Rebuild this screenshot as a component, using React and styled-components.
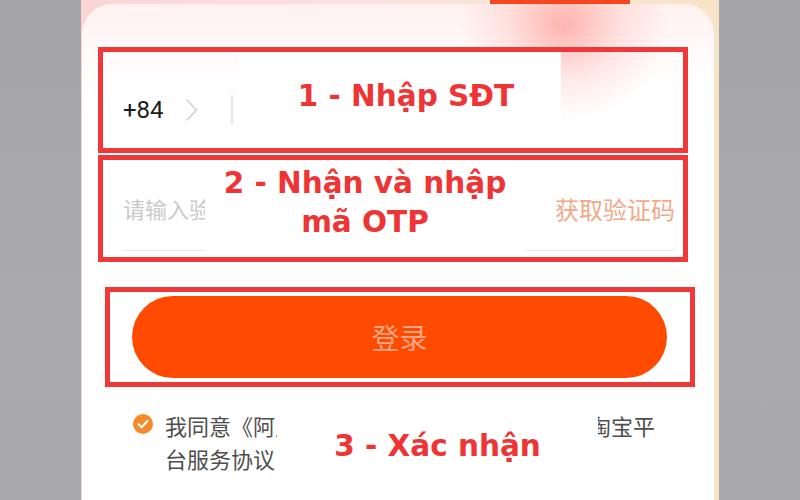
import React from "react";
import styled, { createGlobalStyle } from "styled-components";

const Global = createGlobalStyle`
  html, body { margin: 0; padding: 0; }
  body { width: 800px; height: 500px; overflow: hidden; background: #a7a7ab; }
`;

const Page = styled.div`
  display: flex;
  width: 800px;
  height: 500px;
`;

const Side = styled.div`
  width: ${(p) => p.$w}px;
  flex: none;
  background: linear-gradient(180deg, #a5a5a9 0%, #aaaaae 60%, #a9a9ad 100%);
`;

const Phone = styled.div`
  width: 638px;
  flex: none;
  padding-top: 4px;
  box-sizing: border-box;
  background:
    linear-gradient(#f4461f, #f4461f) 409px 0 / 140px 5px no-repeat,
    linear-gradient(90deg, #fbd5d5 0%, #fbe2df 45%, #f7e4c8 100%);
  overflow: hidden;
`;

const Card = styled.div`
  margin: 0 5px 0 1px;
  height: 496px;
  border-radius: 30px 30px 0 0;
  box-sizing: border-box;
  padding: 43px 0 0 16px;
  background:
    radial-gradient(ellipse 105px 95px at 482px 22px, rgba(255, 90, 80, 0.42), rgba(255, 120, 110, 0.16) 55%, rgba(255, 255, 255, 0) 100%),
    linear-gradient(180deg, #fff1ef 0px, #fff9f9 40px, #ffffff 90px);
`;

const Annot = styled.div`
  box-sizing: border-box;
  width: 590px;
  height: ${(p) => p.$h}px;
  margin-top: ${(p) => p.$mt || 0}px;
  margin-left: ${(p) => p.$ml || 0}px;
  border: 5px solid #f13838;
  display: flex;
  align-items: ${(p) => p.$align || "stretch"};
  padding: ${(p) => p.$pad || "0"};
`;

const Label = styled.div`
  font-family: "DejaVu Sans", "Open Sans", sans-serif;
  font-weight: 700;
  font-size: 29.5px;
  color: #ee3434;
  line-height: ${(p) => p.$lh || 34}px;
  text-align: center;
  white-space: nowrap;
`;

const Patch = styled.div`
  background: #ffffff;
  align-self: stretch;
  display: flex;
  justify-content: center;
  align-items: center;
  width: ${(p) => (p.$w ? p.$w + "px" : "auto")};
  flex: ${(p) => (p.$w ? "none" : "1")};
  margin-left: ${(p) => p.$ml || 0}px;
  padding-bottom: ${(p) => p.$pb || 0}px;
  padding-left: ${(p) => p.$pl || 0}px;
  box-sizing: border-box;
`;

const Prefix = styled.div`
  display: flex;
  align-items: center;
  padding-left: 20px;
  margin-top: 20px;
`;

const Code = styled.span`
  font-family: "Roboto", "Liberation Sans", sans-serif;
  font-size: 24px;
  color: #1c1c1c;
  width: 47px;
`;

const Chevron = styled.svg`
  margin-left: 15px;
  flex: none;
`;

const Divider = styled.div`
  width: 2px;
  height: 30px;
  background: #e8e8e8;
  margin-left: 33px;
`;

const Field = styled.div`
  box-sizing: border-box;
  width: ${(p) => p.$w}px;
  margin-left: ${(p) => p.$ml || 0}px;
  margin-right: ${(p) => p.$mr || 0}px;
  height: 91px;
  padding-top: 6px;
  border-bottom: 1.5px solid #e9e9e9;
  display: flex;
  align-items: center;
  justify-content: ${(p) => (p.$right ? "flex-end" : "flex-start")};
  overflow: hidden;
  white-space: nowrap;
  font-family: "Noto Sans CJK SC", sans-serif;
  font-size: ${(p) => p.$fs || 22}px;
  color: ${(p) => p.$color};
  flex: none;
`;

const LoginButton = styled.button`
  width: 535px;
  height: 82px;
  border: none;
  border-radius: 41px;
  background: #ff4b00;
  color: #f7a788;
  font-family: "Noto Sans CJK SC", sans-serif;
  font-size: 28px;
  padding: 0;
`;

const Agree = styled.div`
  display: flex;
  align-items: flex-start;
  margin-top: 21px;
  padding-left: 35px;
`;

const Check = styled.svg`
  flex: none;
  margin-top: 6px;
  margin-right: 12px;
`;

const AgreeGrid = styled.div`
  width: 490px;
  display: grid;
  grid-template-columns: 112px 1fr 57px;
  grid-template-rows: 33px 33px;
  font-family: "Noto Sans CJK SC", sans-serif;
  font-size: 22px;
  color: #4e4e4e;
`;

const Clip = styled.div`
  overflow: hidden;
  white-space: nowrap;
  display: flex;
  align-items: center;
  justify-content: ${(p) => (p.$right ? "flex-end" : "flex-start")};
  grid-column: ${(p) => p.$col};
  grid-row: ${(p) => p.$row};
`;

const GridLabel = styled.div`
  grid-column: 2;
  grid-row: 1 / span 2;
  display: flex;
  align-items: center;
  justify-content: center;
  padding-top: 10px;
`;

export default function App() {
  return (
    <>
      <Global />
      <Page>
        <Side $w={81} />
        <Phone>
          <Card>
            <Annot $h={106} $align="center">
              <Prefix>
                <Code>+84</Code>
                <Chevron width="13" height="24" viewBox="0 0 13 24">
                  <path d="M1.5 1.5 L11.5 12 L1.5 22.5" fill="none" stroke="#d2d2d2" strokeWidth="1.6" />
                </Chevron>
                <Divider />
              </Prefix>
              <Patch $w={322} $ml={6} $pb={9} $pl={12}>
                <Label>1 - Nhập SĐT</Label>
              </Patch>
            </Annot>
            <Annot $h={107} $mt={2}>
              <Field $w={82} $ml={20} $color="#c9c9c9">请输入验证码</Field>
              <Patch $pb={12}>
                <Label $lh={39}>
                  2 - Nhận và nhập
                  <br />
                  mã OTP
                </Label>
              </Patch>
              <Field $w={150} $mr={8} $right $color="#f2a98a" $fs={24}>获取验证码</Field>
            </Annot>
            <Annot $h={100} $mt={25} $ml={7} $pad="4px 23px 4px 22px">
              <LoginButton>登录</LoginButton>
            </Annot>
            <Agree>
              <Check width="20" height="20" viewBox="0 0 20 20">
                <circle cx="10" cy="10" r="10" fill="#f58a2a" />
                <path d="M5.5 10.2 L8.6 13.2 L14.5 7" fill="none" stroke="#ffffff" strokeWidth="2" strokeLinecap="round" strokeLinejoin="round" />
              </Check>
              <AgreeGrid>
                <Clip $col={1} $row={1}>我同意《阿里巴巴》</Clip>
                <Clip $col={3} $row={1} $right>淘宝平</Clip>
                <Clip $col={1} $row={2}>台服务协议</Clip>
                <GridLabel>
                  <Label>3 - Xác nhận</Label>
                </GridLabel>
              </AgreeGrid>
            </Agree>
          </Card>
        </Phone>
        <Side $w={81} />
      </Page>
    </>
  );
}
